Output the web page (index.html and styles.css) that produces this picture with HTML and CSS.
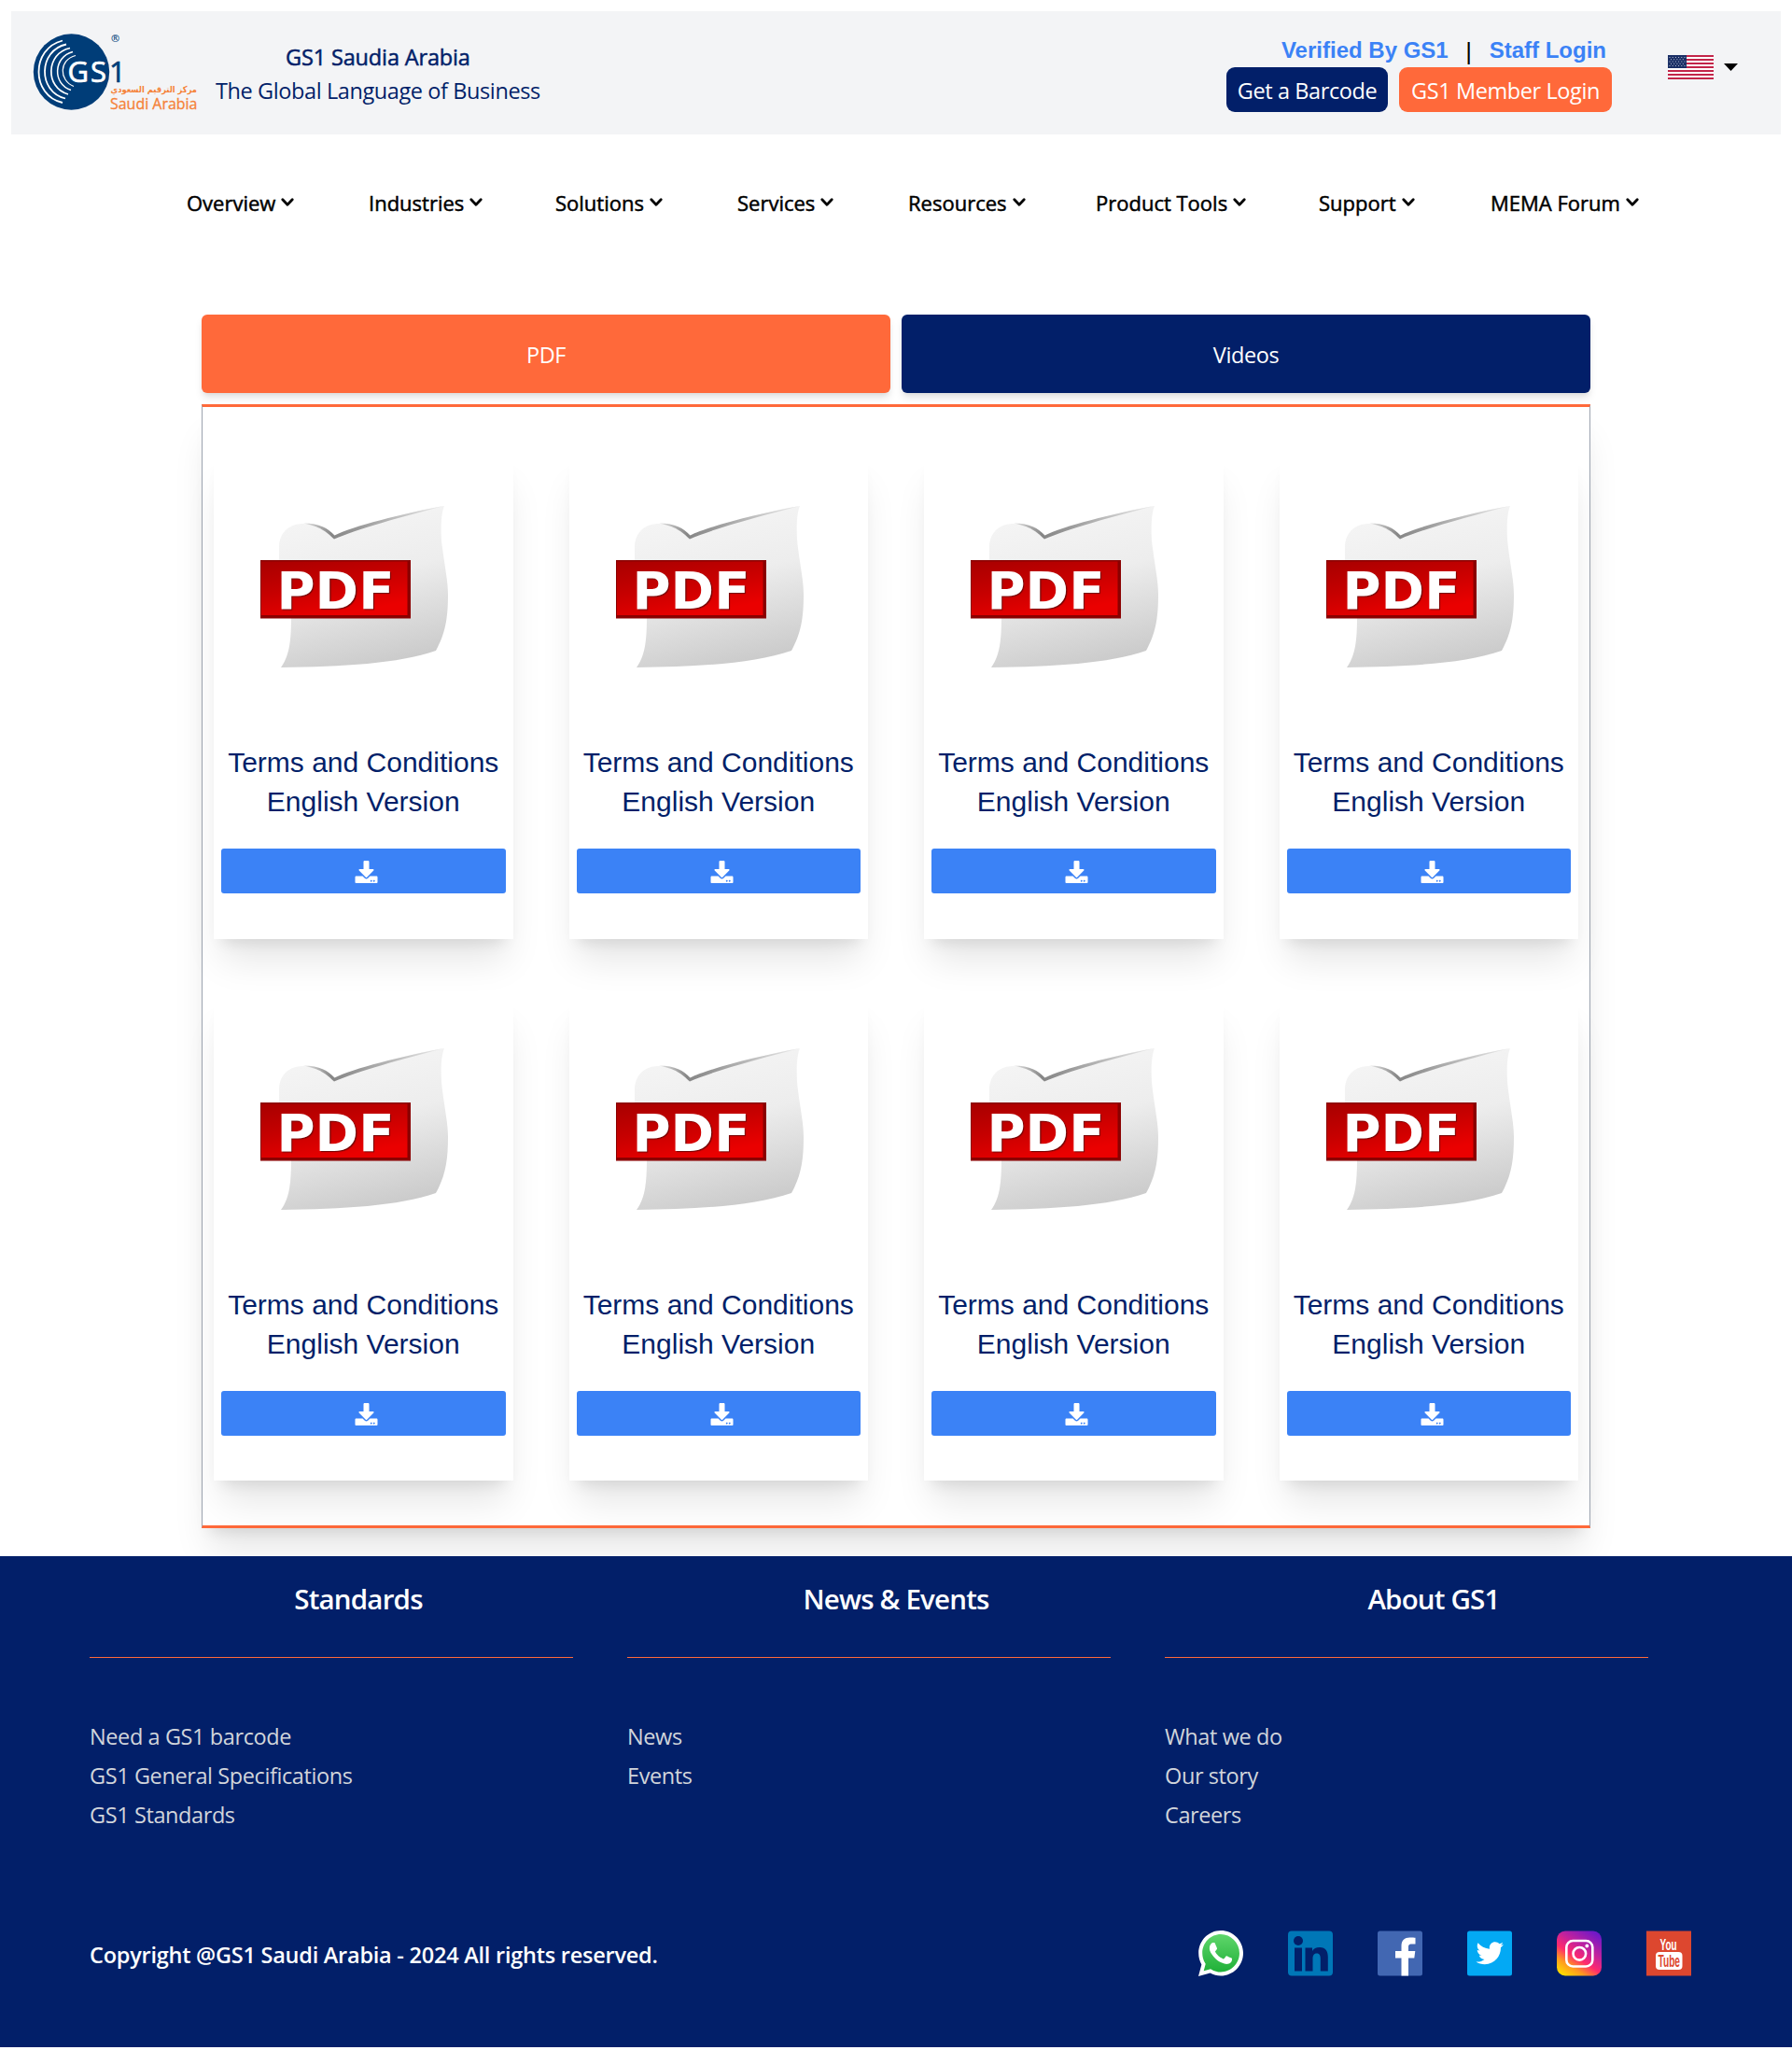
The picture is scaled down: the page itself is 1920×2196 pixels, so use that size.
FILE: index.html
```
<!DOCTYPE html>
<html lang="en">
<head>
<meta charset="utf-8">
<title>GS1 Saudi Arabia</title>
<link rel="stylesheet" href="styles.css">
</head>
<body>
<svg class="defs" width="0" height="0" aria-hidden="true">
  <defs>
    <linearGradient id="paper" x1="0.35" y1="0" x2="0.6" y2="1">
      <stop offset="0" stop-color="#f5f5f5"/><stop offset="0.45" stop-color="#ededed"/><stop offset="1" stop-color="#cacaca"/>
    </linearGradient>
    <linearGradient id="fold" x1="0" y1="0" x2="1" y2="0">
      <stop offset="0" stop-color="#e4e4e4"/><stop offset="0.2" stop-color="#868686"/><stop offset="0.4" stop-color="#9a9a9a"/><stop offset="1" stop-color="#ececec"/>
    </linearGradient>
    <linearGradient id="label" x1="0" y1="0" x2="0.5" y2="1">
      <stop offset="0" stop-color="#a80000"/><stop offset="0.5" stop-color="#c60000"/><stop offset="1" stop-color="#ea0000"/>
    </linearGradient>
    <linearGradient id="wa" x1="0" y1="0" x2="0" y2="1">
      <stop offset="0" stop-color="#5fd66b"/><stop offset="1" stop-color="#20b038"/>
    </linearGradient>
    <linearGradient id="ig" x1="0.15" y1="1" x2="0.8" y2="0">
      <stop offset="0" stop-color="#ffdd00"/><stop offset="0.22" stop-color="#ff9a1f"/><stop offset="0.42" stop-color="#ff2a6d"/><stop offset="0.65" stop-color="#c4229c"/><stop offset="1" stop-color="#7018c8"/>
    </linearGradient>
    <symbol id="chevron" viewBox="0 0 14 10"><path d="M1.8 1.8 7 7.2l5.2-5.4" fill="none" stroke="#000" stroke-width="2.8" stroke-linecap="round" stroke-linejoin="round"/></symbol>
    <symbol id="download" viewBox="0 0 512 512"><path fill="#fff" d="M216 0h80c13.3 0 24 10.7 24 24v168h87.7c17.8 0 26.7 21.5 14.1 34.1L269.7 378.3c-7.5 7.5-19.8 7.5-27.3 0L90.1 226.1c-12.6-12.6-3.7-34.1 14.1-34.1H192V24c0-13.3 10.7-24 24-24zm296 376v112c0 13.3-10.7 24-24 24H24c-13.3 0-24-10.7-24-24V376c0-13.3 10.7-24 24-24h146.7l49 49c20.1 20.1 52.5 20.1 72.6 0l49-49H488c13.3 0 24 10.7 24 24zm-124 88c0-11-9-20-20-20s-20 9-20 20 9 20 20 20 20-9 20-20zm64 0c0-11-9-20-20-20s-20 9-20 20 9 20 20 20 20-9 20-20z"/></symbol>
    <symbol id="pdf" viewBox="0 0 304 311">
      <path d="M62 115V100C63 84 74 76 88 76c13 0 22 5 33 16C155 76 205 62 239 57C235 66 235 88 237 102C240 125 243 138 243 152C243 178 240 194 230 212C190 226 130 229 64 230C72 219 75 205 75 177Z" fill="url(#paper)"/>
      <path d="M88 75.500C106 75.500 114 81 121.500 88.500C140 79 195 65 239 57C195 68 145 82 121 92.500C112 84 106 79 88 75.500Z" fill="url(#fold)"/>
      <rect x="42" y="115" width="161" height="62.500" fill="#8a0000"/>
      <rect x="43" y="116.500" width="156.500" height="57.500" fill="url(#label)"/>
      <text x="59.500" y="167" textLength="126" lengthAdjust="spacingAndGlyphs" class="pdf-word">PDF</text>
    </symbol>
  </defs>
</svg>

<header class="topbar">
  <svg class="logo" width="176" height="84" viewBox="0 0 176 84" role="img" aria-label="GS1 Saudi Arabia">
    <circle cx="40.500" cy="41" r="40.700" fill="#003d78"/>
    <g fill="none" stroke="#fff">
      <path d="M31 7.500C-3 16-3 66 31 74" stroke-width="1.800"/>
      <path d="M35 11.500C5 18 4 62 34 69.500" stroke-width="1.800"/>
      <path d="M39 15.500C13 21 12 58 37 65" stroke-width="1.700"/>
      <path d="M42 19.500C21 25 20 54 40 60.500" stroke-width="1.500"/>
      <path d="M45 23.500C27 28 27 50 43 56.500" stroke-width="1.200"/>
    </g>
    <text x="36.500" y="52" class="logo-gs" textLength="41.500">GS</text>
    <text x="81" y="52" class="logo-one">1</text>
    <text x="83" y="8.500" class="logo-reg">®</text>
    <text x="82.500" y="63" class="logo-ar" direction="rtl" text-anchor="end" textLength="92.500" lengthAdjust="spacingAndGlyphs">مركز الترقيم السعودي</text>
    <text x="82" y="80.500" class="logo-en" textLength="93.500" lengthAdjust="spacingAndGlyphs">Saudi Arabia</text>
  </svg>
  <div class="tagline">
    <div class="tagline-name">GS1 Saudia Arabia</div>
    <div>The Global Language of Business</div>
  </div>
  <div class="account">
    <div class="links"><a>Verified By GS1</a><span class="bar">|</span><a>Staff Login</a></div>
    <div class="buttons"><a class="btn btn-navy">Get a Barcode</a><a class="btn btn-orange">GS1 Member Login</a></div>
  </div>
  <div class="lang">
    <svg width="49" height="26" viewBox="0 0 49 26">
      <path fill="#fff" d="M0 0h49v26H0z"/>
      <path stroke="#c22549" stroke-width="2" d="M0 1h49M0 5h49M0 9h49M0 13h49M0 17h49M0 21h49M0 25h49"/>
      <path fill="#1a2f66" d="M0 0h20v14H0z"/>
      <path stroke="#b9c0d2" stroke-width="1" stroke-dasharray="1 2.200" d="M1.500 2.500h18M3 4.700h16M1.500 7h18M3 9.300h16M1.500 11.500h18"/>
    </svg>
    <svg width="15" height="8" viewBox="0 0 15 8"><path d="M0 0h15L7.500 8z"/></svg>
  </div>
</header>

<nav class="menu">
  <a><span>Overview</span><svg><use href="#chevron"/></svg></a>
  <a><span>Industries</span><svg><use href="#chevron"/></svg></a>
  <a><span>Solutions</span><svg><use href="#chevron"/></svg></a>
  <a><span>Services</span><svg><use href="#chevron"/></svg></a>
  <a><span>Resources</span><svg><use href="#chevron"/></svg></a>
  <a><span>Product Tools</span><svg><use href="#chevron"/></svg></a>
  <a><span>Support</span><svg><use href="#chevron"/></svg></a>
  <a><span>MEMA Forum</span><svg><use href="#chevron"/></svg></a>
</nav>

<main class="content">
  <div class="tabs"><button class="tab tab-active">PDF</button><button class="tab">Videos</button></div>
  <section class="panel">
    <article class="card"><svg class="thumb"><use href="#pdf"/></svg><h2>Terms and Conditions English Version</h2><a class="download"><svg><use href="#download"/></svg></a></article>
    <article class="card"><svg class="thumb"><use href="#pdf"/></svg><h2>Terms and Conditions English Version</h2><a class="download"><svg><use href="#download"/></svg></a></article>
    <article class="card"><svg class="thumb"><use href="#pdf"/></svg><h2>Terms and Conditions English Version</h2><a class="download"><svg><use href="#download"/></svg></a></article>
    <article class="card"><svg class="thumb"><use href="#pdf"/></svg><h2>Terms and Conditions English Version</h2><a class="download"><svg><use href="#download"/></svg></a></article>
    <article class="card"><svg class="thumb"><use href="#pdf"/></svg><h2>Terms and Conditions English Version</h2><a class="download"><svg><use href="#download"/></svg></a></article>
    <article class="card"><svg class="thumb"><use href="#pdf"/></svg><h2>Terms and Conditions English Version</h2><a class="download"><svg><use href="#download"/></svg></a></article>
    <article class="card"><svg class="thumb"><use href="#pdf"/></svg><h2>Terms and Conditions English Version</h2><a class="download"><svg><use href="#download"/></svg></a></article>
    <article class="card"><svg class="thumb"><use href="#pdf"/></svg><h2>Terms and Conditions English Version</h2><a class="download"><svg><use href="#download"/></svg></a></article>
  </section>
</main>

<footer class="footer">
  <div class="columns">
    <section class="column"><h3>Standards</h3><ul><li>Need a GS1 barcode</li><li>GS1 General Specifications</li><li>GS1 Standards</li></ul></section>
    <section class="column"><h3>News &amp; Events</h3><ul><li>News</li><li>Events</li></ul></section>
    <section class="column"><h3>About GS1</h3><ul><li>What we do</li><li>Our story</li><li>Careers</li></ul></section>
  </div>
  <div class="bottom">
    <p>Copyright @GS1 Saudi Arabia - 2024 All rights reserved.</p>
    <div class="social">
      <svg viewBox="0 32 448 448" preserveAspectRatio="none"><path fill="#fff" d="M380.900 97.100C339 55.100 283.200 32 223.900 32c-122.400 0-222 99.600-222 222 0 39.100 10.200 77.300 29.600 111L0 480l117.700-30.900c32.400 17.700 68.900 27 106.100 27h.1c122.300 0 224.100-99.600 224.100-222 0-59.300-25.200-115-67.100-157z"/><path fill="url(#wa)" d="M223.900 438.700c-33.200 0-65.700-8.900-94-25.700l-6.700-4-69.800 18.300L72 359.200l-4.400-7c-18.500-29.400-28.200-63.300-28.200-98.200 0-101.700 82.800-184.500 184.600-184.500 49.300 0 95.600 19.200 130.400 54.100 34.800 34.900 56.200 81.200 56.100 130.500 0 101.800-84.900 184.600-186.600 184.600z"/><path fill="#fff" d="M325.100 300.500c-5.500-2.800-32.800-16.200-37.900-18-5.100-1.900-8.800-2.800-12.500 2.800-3.700 5.600-14.300 18-17.600 21.800-3.200 3.700-6.500 4.200-12 1.400-32.600-16.300-54-29.100-75.500-66-5.700-9.800 5.700-9.100 16.300-30.300 1.800-3.700.9-6.900-.5-9.700-1.400-2.800-12.500-30.100-17.100-41.200-4.500-10.800-9.100-9.300-12.500-9.500-3.200-.2-6.900-.2-10.600-.2-3.700 0-9.700 1.400-14.800 6.900-5.100 5.600-19.400 19-19.400 46.300 0 27.300 19.900 53.700 22.600 57.400 2.800 3.700 39.100 59.700 94.800 83.800 35.200 15.200 49 16.500 66.600 13.900 10.700-1.600 32.800-13.400 37.400-26.400 4.600-13 4.600-24.100 3.200-26.400-1.300-2.500-5-3.900-10.500-6.600z"/></svg>
      <svg viewBox="0 0 48 48"><rect width="48" height="48" rx="4" fill="#0077b7"/><g fill="#021f69"><circle cx="11" cy="10.500" r="5"/><path d="M7 18h8v25H7zM18.500 18H26v3.500c1.500-2.500 4-4 8-4 6.500 0 8.800 4.500 8.800 10.500v15h-8V29.500c0-3-.8-5.500-4-5.500-3.300 0-4.300 2.500-4.300 5.500V43h-8z"/></g></svg>
      <svg viewBox="0 0 48 48"><rect width="48" height="48" rx="2.500" fill="#4267b2"/><path fill="#fff" d="M25.500 48V29H19v-7.500h6.500V16c0-6 3.500-9 9-9 2.500 0 5 .2 6 .3V14h-4c-3 0-3.500 1.500-3.500 3.500v4h7.300l-1 7.500H33v19z"/></svg>
      <svg viewBox="0 0 48 48"><rect width="48" height="48" rx="2.500" fill="#03a9f4"/><path fill="#fff" transform="translate(9.500 9) scale(.0575)" d="M459.370 151.716c.325 4.548.325 9.097.325 13.645 0 138.720-105.583 298.558-298.558 298.558-59.452 0-114.680-17.219-161.137-47.106 8.447.974 16.568 1.299 25.340 1.299 49.055 0 94.213-16.568 130.274-44.832-46.132-.975-84.792-31.188-98.112-72.772 6.498.974 12.995 1.624 19.818 1.624 9.421 0 18.843-1.300 27.614-3.573-48.081-9.747-84.143-51.980-84.143-102.985v-1.299c13.969 7.797 30.214 12.670 47.431 13.319-28.264-18.843-46.781-51.005-46.781-87.391 0-19.492 5.197-37.360 14.294-52.954 51.655 63.675 129.300 105.258 216.365 109.807-1.624-7.797-2.599-15.918-2.599-24.040 0-57.828 46.782-104.934 104.934-104.934 30.213 0 57.502 12.670 76.670 33.137 23.715-4.548 46.456-13.320 66.599-25.340-7.798 24.366-24.366 44.833-46.132 57.827 21.117-2.273 41.584-8.122 60.426-16.243-14.292 20.791-32.161 39.308-52.628 54.253z"/></svg>
      <svg viewBox="0 0 48 48"><rect width="48" height="48" rx="9" fill="url(#ig)"/><g fill="none" stroke="#fff" stroke-width="2.600"><rect x="10.300" y="10.500" width="28" height="27.500" rx="7"/><circle cx="24.300" cy="24.300" r="6.800"/></g><circle cx="32.300" cy="16" r="1.900" fill="#fff"/></svg>
      <svg viewBox="0 0 48 48"><rect width="48" height="48" fill="#dd472f"/><text x="14.500" y="20" class="yt-you" textLength="18" lengthAdjust="spacingAndGlyphs">You</text><rect x="10" y="22.500" width="28.500" height="19" rx="4" fill="#fff"/><text x="12.500" y="38" class="yt-tube" textLength="23.500" lengthAdjust="spacingAndGlyphs">Tube</text></svg>
    </div>
  </div>
</footer>
</body>
</html>
```
FILE: styles.css
```
* { box-sizing: border-box; }
body {
  margin: 0;
  background: #fff;
  font-family: "Open Sans", "Noto Sans", sans-serif;
  font-size: 23.5px;
  line-height: 36px;
  letter-spacing: -0.4px;
  color: #000;
}
svg { display: block; flex: none; }
.defs { position: absolute; }

.topbar {
  display: flex;
  height: 132px;
  margin: 12px 12px 0;
  padding: 0 46px 0 24px;
  background: #f3f4f6;
}
.logo { margin-top: 24px; letter-spacing: 0; overflow: visible; }
.logo-gs { font: 400 31px "Open Sans", sans-serif; fill: #fff; stroke: #fff; stroke-width: 0.7px; }
.logo-one { font: 400 31px "Open Sans", sans-serif; fill: #003d78; stroke: #003d78; stroke-width: 0.7px; }
.logo-reg { font: 600 11px "Open Sans", sans-serif; fill: #003d78; }
.logo-ar { font: 700 9.5px "DejaVu Sans", sans-serif; fill: #f58238; }
.logo-en { font: 400 15.5px "Open Sans", sans-serif; fill: #f58238; stroke: #f58238; stroke-width: 0.3px; }

.tagline { margin: 31px 0 0 19px; text-align: center; color: #021f69; white-space: nowrap; }
.tagline-name { -webkit-text-stroke: 0.5px; letter-spacing: -0.15px; }

.account { margin: 24px 0 0 auto; }
.links {
  display: flex;
  justify-content: flex-end;
  padding-right: 6px;
  font: 700 24px/36px "Liberation Sans", Arial, sans-serif;
  letter-spacing: 0;
  color: #3b82f6;
}
.bar { width: 44px; text-align: center; color: #000; font-weight: 600; font-family: "Open Sans", sans-serif; }
.buttons { display: flex; gap: 12px; }
.btn { height: 48px; line-height: 51px; border-radius: 9px; color: #fff; text-align: center; white-space: nowrap; }
.btn-navy { width: 173px; background: #021f69; }
.btn-orange { width: 228px; background: #ff693a; }
.lang { display: flex; align-items: center; gap: 11px; height: 120px; margin-left: 60px; }

.menu {
  display: grid;
  grid-template-columns: 195px 200px 195px 183px 201px 239px 184px 161px;
  height: 193px;
  padding: 55px 0 0 200px;
  font-size: 22px;
  letter-spacing: 0;
  white-space: nowrap;
  -webkit-text-stroke: 0.5px;
}
.menu a { display: flex; align-items: center; gap: 6px; height: 36px; }
.menu svg { width: 14px; height: 10px; }

.content { padding: 0 216px; }
.tabs { display: grid; grid-template-columns: 1fr 1fr; gap: 12px; }
.tab {
  height: 84px;
  padding: 1px 0 0;
  border: 0;
  border-radius: 6px;
  background: #021f69;
  color: #fff;
  font: inherit;
  letter-spacing: inherit;
  box-shadow: 0 6px 9px -1.5px rgba(0,0,0,.1), 0 3px 6px -3px rgba(0,0,0,.1);
}
.tab-active { background: #ff693a; }

.panel {
  display: grid;
  grid-template-columns: repeat(4, 1fr);
  gap: 60px;
  margin-top: 12px;
  padding: 49px 12px 48px;
  border: 1px solid #9ca3af;
  border-top: 3px solid #ff693a;
  border-bottom: 3px solid #ff693a;
  box-shadow: 0 30px 37.5px -7.5px rgba(0,0,0,.1), 0 12px 15px -9px rgba(0,0,0,.1);
}
.card {
  height: 520.5px;
  padding: 0 8px;
  background: #fff;
  box-shadow: 0 30px 37.5px -7.5px rgba(0,0,0,.1), 0 12px 15px -9px rgba(0,0,0,.1);
}
.thumb { width: 304px; height: 311px; }
.pdf-word { font: 700 55px "DejaVu Sans", sans-serif; letter-spacing: 0; fill: #fff; text-shadow: 1px 1px 1px #700000; }
.card h2 {
  margin: 0 0 29px;
  font: 400 30px/42px "Liberation Sans", Arial, sans-serif;
  letter-spacing: 0;
  text-align: center;
  color: #021f69;
}
.download { display: flex; align-items: center; justify-content: center; height: 48px; padding: 2px 0 0 7px; border-radius: 3px; background: #3b82f6; }
.download svg { width: 25px; height: 24px; }

.footer { height: 526px; margin-top: 30px; background: #021f69; color: #fff; }
.columns { display: grid; grid-template-columns: repeat(3, 576px); padding: 0 96px; height: 384px; }
.column h3 {
  width: 518px;
  height: 109px;
  margin: 0 0 64px;
  padding: 28px 0 0 58px;
  border-bottom: 1px solid #ff693a;
  font-size: 29.5px;
  font-weight: 600;
  letter-spacing: -0.8px;
  text-align: center;
}
.column ul { margin: 0; padding: 0; list-style: none; color: #d1d5db; line-height: 41.8px; }
.bottom { display: flex; justify-content: space-between; align-items: center; height: 82px; padding: 0 108px 0 96px; }
.bottom p { margin: 3px 0 0; font-weight: 600; letter-spacing: -0.24px; }
.social { display: flex; gap: 48px; }
.social svg { width: 48px; height: 49px; }
.yt-you { font: 700 16px "Liberation Sans", sans-serif; fill: #fff; letter-spacing: 0; }
.yt-tube { font: 700 18px "Liberation Sans", sans-serif; fill: #dd472f; letter-spacing: 0; }
```
